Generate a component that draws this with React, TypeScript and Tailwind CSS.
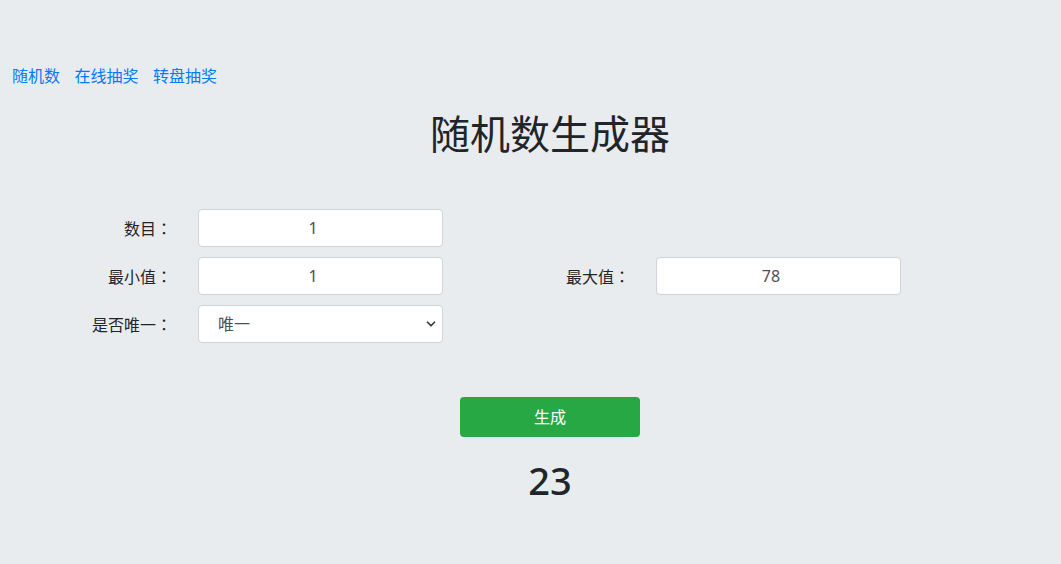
import { ChevronDown } from 'lucide-react';

function Label({ text }: { text: string }) {
  return (
    <div
      className="flex h-[38px] w-[183px] items-center justify-end pl-[15px] pr-[11px] text-[16px] text-[#212529]"
      style={{ fontFamily: '"Noto Sans CJK TC", "Noto Sans CJK SC", sans-serif' }}
    >
      {text}
    </div>
  );
}

function Field({ value }: { value: string }) {
  return (
    <div className="w-[275px] px-[15px]">
      <input
        readOnly
        value={value}
        className="h-[38px] w-full rounded-[4px] border border-[#ced4da] bg-white pl-3 pr-[27px] text-center text-[16px] text-[#495057] outline-none"
      />
    </div>
  );
}

export default function App() {
  return (
    <div
      className="min-h-[564px] w-[1100px] bg-[#e9ecef]"
      style={{ fontFamily: '"Noto Sans", "Noto Sans CJK SC", sans-serif' }}
    >
      {/* Nav links */}
      <nav className="flex gap-[14.5px] px-3 pt-[64px] text-[16px] leading-6 text-[#007bff]">
        <a href="#">随机数</a>
        <a href="#">在线抽奖</a>
        <a href="#">转盘抽奖</a>
      </nav>

      <h1 className="mt-[22px] text-center text-[40px] leading-[48px] text-[#212529]">随机数生成器</h1>

      {/* Form */}
      <div className="mt-[51px] flex flex-col gap-[10px]">
        <div className="flex">
          <Label text="数目：" />
          <Field value="1" />
        </div>
        <div className="flex">
          <Label text="最小值：" />
          <Field value="1" />
          <Label text="最大值：" />
          <Field value="78" />
        </div>
        <div className="flex">
          <Label text="是否唯一：" />
          <div className="relative w-[275px] px-[15px]">
            <select className="h-[38px] w-full appearance-none rounded-[4px] border border-[#ced4da] bg-white pl-[19px] text-[16px] text-[#495057] outline-none">
              <option>唯一</option>
              <option>不唯一</option>
            </select>
            <ChevronDown size={14} strokeWidth={3} className="pointer-events-none absolute right-[20px] top-[12px] text-[#343a40]" />
          </div>
        </div>
      </div>

      <div className="mt-[54px] flex justify-center">
        <button className="h-10 w-[180px] rounded-[4px] bg-[#28a745] text-[16px] text-white">生成</button>
      </div>

      <div className="mt-[21px] text-center text-[38px] font-medium leading-[44px] text-[#212529]">23</div>
    </div>
  );
}
